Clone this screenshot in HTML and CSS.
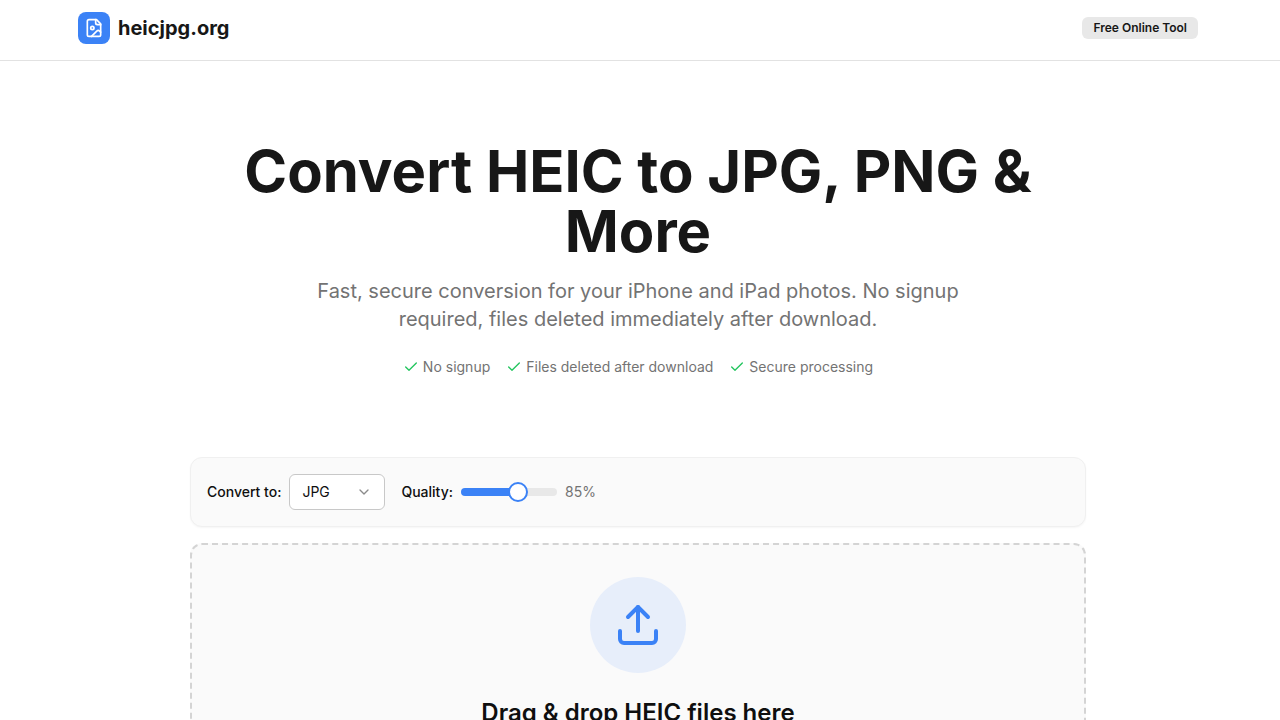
FILE: index.html
```html
<!DOCTYPE html>
<html lang="en">
<head>
<meta charset="utf-8">
<meta name="viewport" content="width=device-width, initial-scale=1">
<title>heicjpg.org</title>
<link rel="stylesheet" href="styles.css">
</head>
<body>
<header class="site-header">
  <div class="header-inner">
    <a class="brand" href="#">
      <span class="brand-mark">
        <svg class="icon brand-icon" viewBox="0 0 24 24" aria-hidden="true"><path d="M15 2H6a2 2 0 0 0-2 2v16a2 2 0 0 0 2 2h12a2 2 0 0 0 2-2V7Z"/><path d="M14 2v4a2 2 0 0 0 2 2h4"/><circle cx="10" cy="12" r="2"/><path d="m20 17-1.296-1.296a2.41 2.41 0 0 0-3.408 0L9 22"/></svg>
      </span>
      <span>heicjpg.org</span>
    </a>
    <span class="badge">Free Online Tool</span>
  </div>
</header>
<main class="page">
  <section class="hero">
    <h1 class="hero-title">Convert HEIC to JPG, PNG &amp; More</h1>
    <p class="hero-text">Fast, secure conversion for your iPhone and iPad photos. No signup required, files deleted immediately after download.</p>
    <ul class="perks">
      <li class="perk"><svg class="icon check" viewBox="0 0 24 24" aria-hidden="true"><path d="M20 6 9 17l-5-5"/></svg>No signup</li>
      <li class="perk"><svg class="icon check" viewBox="0 0 24 24" aria-hidden="true"><path d="M20 6 9 17l-5-5"/></svg>Files deleted after download</li>
      <li class="perk"><svg class="icon check" viewBox="0 0 24 24" aria-hidden="true"><path d="M20 6 9 17l-5-5"/></svg>Secure processing</li>
    </ul>
  </section>
  <section class="converter">
    <form class="options">
      <div class="option">
        <label for="format">Convert to:</label>
        <div class="select-wrap">
          <select class="select" id="format"><option>JPG</option><option>PNG</option><option>WebP</option></select>
          <svg class="icon chevron" viewBox="0 0 24 24" aria-hidden="true"><path d="m6 9 6 6 6-6"/></svg>
        </div>
      </div>
      <div class="option">
        <label for="quality">Quality:</label>
        <input class="slider" id="quality" type="range" min="60" max="100" value="85">
        <output class="value" for="quality">85%</output>
      </div>
    </form>
    <div class="dropzone">
      <span class="drop-mark"><svg class="icon drop-icon" viewBox="0 0 24 24" aria-hidden="true"><path d="M12 3v12"/><path d="m17 8-5-5-5 5"/><path d="M21 15v4a2 2 0 0 1-2 2H5a2 2 0 0 1-2-2v-4"/></svg></span>
      <h2 class="drop-title">Drag &amp; drop HEIC files here</h2>
    </div>
  </section>
</main>
</body>
</html>
```
FILE: styles.css
```css
* { box-sizing: border-box; margin: 0; padding: 0; }

html { scrollbar-width: none; }

body {
  font-family: Inter, "Liberation Sans", sans-serif;
  font-size: 14px;
  line-height: 20px;
  color: #171717;
  background: #fff;
}

.icon {
  fill: none;
  stroke: currentColor;
  stroke-width: 2;
  stroke-linecap: round;
  stroke-linejoin: round;
  flex: none;
}

.site-header {
  border-bottom: 1px solid #e2e2e2;
  padding-right: 4px;
}

.header-inner {
  max-width: 1152px;
  margin: 0 auto;
  padding: 12px 16px 16px;
  display: flex;
  align-items: center;
  justify-content: space-between;
}

.brand {
  display: flex;
  align-items: center;
  gap: 8px;
  font-size: 20px;
  line-height: 28px;
  font-weight: 700;
  color: inherit;
  text-decoration: none;
}

.brand-mark {
  display: grid;
  place-items: center;
  width: 32px;
  height: 32px;
  border-radius: 8px;
  background: #3b82f6;
  color: #fff;
}

.brand-icon { width: 20px; height: 20px; }

.badge {
  padding: 3px 11px;
  border-radius: 6px;
  background: #e8e8e8;
  font-size: 12px;
  line-height: 16px;
  font-weight: 600;
}

.page { padding: 0 20px 0 16px; }

.hero {
  max-width: 896px;
  margin: 0 auto;
  padding: 80px 0;
  text-align: center;
}

.hero-title {
  margin-bottom: 16px;
  font-size: 58px;
  line-height: 60px;
  font-weight: 700;
}

.hero-text {
  max-width: 672px;
  margin: 0 auto 24px;
  font-size: 20px;
  line-height: 28px;
  color: #737373;
}

.perks {
  display: flex;
  flex-wrap: wrap;
  justify-content: center;
  gap: 16px;
  list-style: none;
  color: #737373;
}

.perk { display: flex; align-items: center; gap: 4px; }

.check { width: 16px; height: 16px; color: #22c55e; }

.converter {
  max-width: 896px;
  margin: 0 auto;
  display: grid;
  gap: 16px;
  color: #0f0f0f;
}

.options {
  display: flex;
  flex-wrap: wrap;
  gap: 16px;
  padding: 16px;
  border: 1px solid #f0f0f0;
  border-radius: 12px;
  background: #fafafa;
  box-shadow: 0 1px 2px rgb(0 0 0 / 4%);
}

.option {
  display: flex;
  align-items: center;
  gap: 8px;
  font-weight: 500;
}

.select-wrap { display: grid; align-items: center; width: 96px; }

.select {
  grid-area: 1 / 1;
  width: 100%;
  height: 36px;
  padding: 0 12px;
  appearance: none;
  border: 1px solid #c8c8c8;
  border-radius: 6px;
  background: #fff;
  color: inherit;
  font: inherit;
  font-weight: 400;
}

.chevron {
  grid-area: 1 / 1;
  justify-self: end;
  width: 16px;
  height: 16px;
  margin-right: 13px;
  color: #8b8b8b;
  pointer-events: none;
}

.slider {
  width: 96px;
  height: 20px;
  appearance: none;
  background: none;
}

.slider::-webkit-slider-runnable-track {
  height: 8px;
  border-radius: 4px;
  background: linear-gradient(90deg, #3b82f6 60%, #e8e8e8 60%);
}

.slider::-webkit-slider-thumb {
  appearance: none;
  width: 20px;
  height: 20px;
  margin-top: -6px;
  border: 2px solid #3b82f6;
  border-radius: 50%;
  background: #fff;
}

.value { font-weight: 400; color: #737373; }

.dropzone {
  display: flex;
  flex-direction: column;
  align-items: center;
  gap: 24px;
  padding: 32px;
  border: 2px dashed #d4d4d4;
  border-radius: 12px;
  background: #fafafa;
}

.drop-mark {
  display: grid;
  place-items: center;
  width: 96px;
  height: 96px;
  border-radius: 50%;
  background: #e7eefa;
  color: #3b82f6;
}

.drop-icon { width: 48px; height: 48px; }

.drop-title {
  font-size: 24px;
  line-height: 32px;
  font-weight: 600;
}
```
